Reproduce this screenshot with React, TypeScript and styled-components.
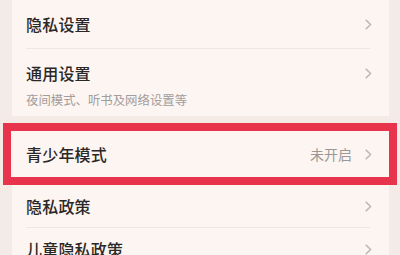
import React from "react";
import styled, { createGlobalStyle } from "styled-components";

const GlobalStyle = createGlobalStyle`
	html, body {
		margin: 0;
		padding: 0;
		background: #f4ebe7;
	}
	body {
		font-family: "Noto Sans CJK SC", "Noto Sans", sans-serif;
		width: 400px;
		height: 255px;
		overflow: hidden;
	}
`;

const Page = styled.div`
	display: flex;
	flex-direction: column;
	width: 400px;
	height: 255px;
	overflow: hidden;
	background: #f4ebe7;
`;

const StyleCard = styled.div<{ $gapBelow?: number }>`
	margin: 0 11px ${(p) => p.$gapBelow ?? 0}px 12px;
	background: #fdf5f1;
	display: flex;
	flex-direction: column;
	flex-shrink: 0;
`;

const Highlight = styled.div`
	margin: 0 3px;
	border: 8px solid #e7334b;
	background: #fdf5f1;
	flex-shrink: 0;
`;

const Row = styled.div<{ $height: number; $padLeft?: number }>`
	height: ${(p) => p.$height}px;
	display: flex;
	align-items: center;
	padding: 0 17px 0 ${(p) => p.$padLeft ?? 14}px;
	box-sizing: border-box;
`;

const TallRow = styled.div`
	height: 67px;
	display: flex;
	flex-direction: column;
	padding: 12px 17px 0 14px;
	box-sizing: border-box;
`;

const TitleLine = styled.div`
	display: flex;
	align-items: center;
	height: 24px;
`;

const Title = styled.span`
	flex: 1;
	font-size: 16px;
	font-weight: 500;
	color: #2a2827;
	letter-spacing: 0.2px;
	white-space: nowrap;
`;

const SubText = styled.div`
	margin-top: 6px;
	font-size: 12.4px;
	color: #a29d9a;
	white-space: nowrap;
`;

const Value = styled.span`
	font-size: 14px;
	color: #9c9794;
	margin-right: 13px;
`;

const Divider = styled.div`
	height: 1px;
	margin: 0 19px 0 14px;
	background: #efe5e1;
`;

const Chevron = () => (
	<svg width="7" height="11" viewBox="0 0 7 11">
		<path d="M1.2 1.2 L5.6 5.5 L1.2 9.8" fill="none" stroke="#bdb8b5" strokeWidth="1.6" strokeLinecap="round" strokeLinejoin="round" />
	</svg>
);

const App = () => {
	return (
		<Page>
			<GlobalStyle />
			<StyleCard $gapBelow={7}>
				<Row $height={48}>
					<Title>隐私设置</Title>
					<Chevron />
				</Row>
				<Divider />
				<TallRow>
					<TitleLine>
						<Title>通用设置</Title>
						<Chevron />
					</TitleLine>
					<SubText>夜间模式、听书及网络设置等</SubText>
				</TallRow>
			</StyleCard>
			<Highlight>
				<Row $height={46} $padLeft={15}>
					<Title>青少年模式</Title>
					<Value>未开启</Value>
					<Chevron />
				</Row>
			</Highlight>
			<StyleCard>
				<Row $height={42}>
					<Title>隐私政策</Title>
					<Chevron />
				</Row>
				<Divider />
				<Row $height={42}>
					<Title>儿童隐私政策</Title>
					<Chevron />
				</Row>
			</StyleCard>
		</Page>
	);
};

export default App;
